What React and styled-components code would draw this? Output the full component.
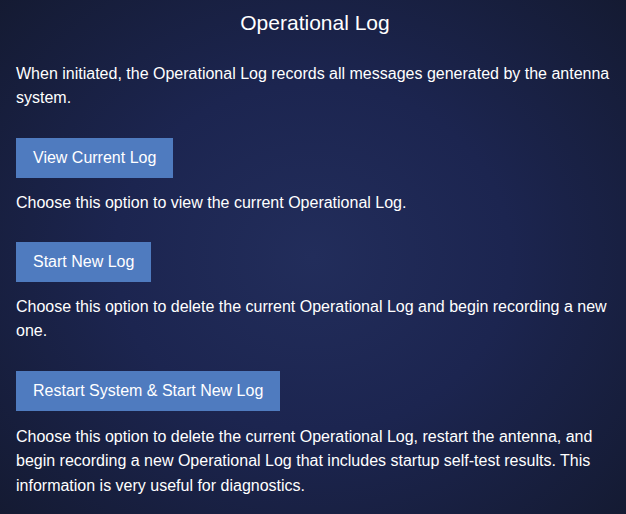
import React from "react";
import styled, { createGlobalStyle } from "styled-components";

const GlobalStyle = createGlobalStyle`
  html, body {
    margin: 0;
    padding: 0;
    height: 100%;
  }
  body {
    background: #161d38;
    font-family: "Liberation Sans", Arial, sans-serif;
  }
`;

const Page = styled.div`
  min-height: 514px;
  box-sizing: border-box;
  padding: 11px 12px 0 16px;
  color: #ffffff;
  background: radial-gradient(
    ellipse 70% 75% at 50% 50%,
    #222d5b 0%,
    #1c2550 45%,
    #141a31 100%
  );
`;

const Title = styled.h1`
  margin: 0;
  font-size: 21px;
  font-weight: normal;
  line-height: 24px;
  text-align: center;
`;

const Text = styled.p`
  margin: ${(p) => p.$top || 0}px 0 0;
  font-size: 16px;
  line-height: 24.5px;
`;

const Option = styled.section`
  margin-top: ${(p) => p.$top}px;
  display: flex;
  flex-direction: column;
  align-items: flex-start;
`;

const Button = styled.button`
  height: 40px;
  padding: 0 17px;
  border: none;
  border-radius: 0;
  background: #4f7bbf;
  color: #ffffff;
  font-family: inherit;
  font-size: 16px;
  cursor: pointer;
`;

const options = [
  {
    label: "View Current Log",
    text: "Choose this option to view the current Operational Log.",
    top: 27,
    gap: 13,
  },
  {
    label: "Start New Log",
    text: "Choose this option to delete the current Operational Log and begin recording a new one.",
    top: 26.5,
    gap: 13,
  },
  {
    label: "Restart System & Start New Log",
    text: "Choose this option to delete the current Operational Log, restart the antenna, and begin recording a new Operational Log that includes startup self-test results. This information is very useful for diagnostics.",
    top: 27,
    gap: 14,
  },
];

export default function App() {
  return (
    <>
      <GlobalStyle />
      <Page>
        <Title>Operational Log</Title>
        <Text $top={26.5}>
          When initiated, the Operational Log records all messages generated by
          the antenna system.
        </Text>
        {options.map((o) => (
          <Option key={o.label} $top={o.top}>
            <Button>{o.label}</Button>
            <Text $top={o.gap}>{o.text}</Text>
          </Option>
        ))}
      </Page>
    </>
  );
}
